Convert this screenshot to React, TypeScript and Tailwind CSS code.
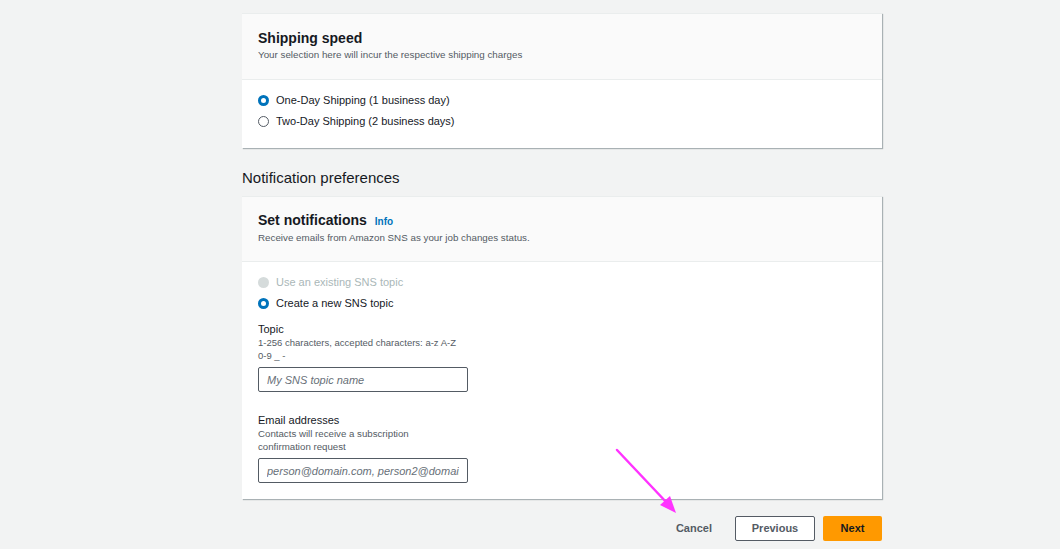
import { useState } from "react";

function Radio({ checked, disabled }: { checked?: boolean; disabled?: boolean }) {
  if (disabled) {
    return <span className="inline-block w-[11px] h-[11px] rounded-full bg-[#d5dbdb]" />;
  }
  if (checked) {
    return (
      <span className="inline-flex w-[11px] h-[11px] rounded-full bg-[#0073bb] items-center justify-center">
        <span className="w-[5px] h-[5px] rounded-full bg-white" />
      </span>
    );
  }
  return <span className="inline-block w-[11px] h-[11px] rounded-full border border-[#545b64] bg-white" />;
}

export default function App() {
  const [speed, setSpeed] = useState("one");

  return (
    <div
      className="relative w-[1060px] h-[549px] overflow-hidden bg-[#f2f3f3] text-[#16191f]"
      style={{ fontFamily: '"Liberation Sans", Arial, sans-serif' }}
    >
      <div className="w-[640px] ml-[242px] pt-[13px]">
        {/* Shipping speed */}
        <div className="bg-white border-t border-[#eaeded] shadow-[1px_1px_1px_0_rgba(0,28,36,0.3)]">
          <div className="bg-[#fafafa] border-b border-[#eaeded] px-4 pt-[15px] h-[66px]">
            <h2 className="text-[14px] font-bold leading-[18px]">Shipping speed</h2>
            <p className="text-[9.8px] leading-[14px] mt-[1px] text-[#545b64]">
              Your selection here will incur the respective shipping charges
            </p>
          </div>
          <div className="px-4 pt-[12px] pb-[19px] flex flex-col gap-[5px]">
            <label className="flex items-center gap-[7px] text-[11px] leading-[16px] cursor-pointer" onClick={() => setSpeed("one")}>
              <Radio checked={speed === "one"} />
              One-Day Shipping (1 business day)
            </label>
            <label className="flex items-center gap-[7px] text-[11px] leading-[16px] cursor-pointer" onClick={() => setSpeed("two")}>
              <Radio checked={speed === "two"} />
              Two-Day Shipping (2 business days)
            </label>
          </div>
        </div>

        <h3 className="text-[15px] leading-[18px] mt-[21px] mb-[9px]">Notification preferences</h3>

        {/* Set notifications */}
        <div className="bg-white border-t border-[#eaeded] shadow-[1px_1px_1px_0_rgba(0,28,36,0.3)]">
          <div className="bg-[#fafafa] border-b border-[#eaeded] px-4 pt-[14px] h-[65px]">
            <h2 className="text-[14px] font-bold leading-[18px]">
              Set notifications <span className="text-[#0073bb] text-[10px] ml-[4px]">Info</span>
            </h2>
            <p className="text-[9.8px] leading-[14px] text-[#545b64]">
              Receive emails from Amazon SNS as your job changes status.
            </p>
          </div>
          <div className="px-4 pt-[12px] pb-[16px]">
            <div className="flex flex-col gap-[5px]">
              <label className="flex items-center gap-[7px] text-[11px] leading-[16px] text-[#aab7b8]">
                <Radio disabled />
                Use an existing SNS topic
              </label>
              <label className="flex items-center gap-[7px] text-[11px] leading-[16px]">
                <Radio checked />
                Create a new SNS topic
              </label>
            </div>

            <div className="mt-[11px] w-[210px]">
              <div className="text-[11px] leading-[14px]">Topic</div>
              <p className="text-[9.5px] leading-[13px] text-[#545b64] w-[200px]">
                1-256 characters, accepted characters: a-z A-Z 0-9 _ -
              </p>
              <input
                placeholder="My SNS topic name"
                className="mt-[5px] w-[210px] h-[25px] border border-[#545b64] rounded-[2px] px-2 text-[11px] italic placeholder:text-[#687078] outline-none"
              />
            </div>

            <div className="mt-[21px] w-[210px]">
              <div className="text-[11px] leading-[14px]">Email addresses</div>
              <p className="text-[9.7px] leading-[13px] text-[#545b64] w-[160px]">
                Contacts will receive a subscription confirmation request
              </p>
              <input
                placeholder="person@domain.com, person2@domain.com"
                className="mt-[5px] w-[210px] h-[25px] border border-[#545b64] rounded-[2px] px-2 text-[11px] italic placeholder:text-[#687078] outline-none"
              />
            </div>
          </div>
        </div>

        {/* Actions */}
        <div className="flex justify-end items-center mt-[17px] gap-2">
          <button className="text-[11px] font-bold text-[#545b64] px-[15px] h-[25px]">Cancel</button>
          <button className="text-[11px] font-bold text-[#545b64] w-[80px] h-[25px] border border-[#545b64] rounded-[2px] bg-white">
            Previous
          </button>
          <button className="text-[11px] font-bold text-[#16191f] w-[59px] h-[25px] rounded-[2px] bg-[#ff9900]">
            Next
          </button>
        </div>
      </div>

      {/* Annotation arrow */}
      <svg className="absolute left-0 top-0 pointer-events-none" width="1060" height="549">
        <line x1="617" y1="450" x2="668" y2="504" stroke="#ff33ff" strokeWidth="2.5" strokeLinecap="round" />
        <polygon points="676,513 660,505 670,496" fill="#ff33ff" />
      </svg>
    </div>
  );
}
